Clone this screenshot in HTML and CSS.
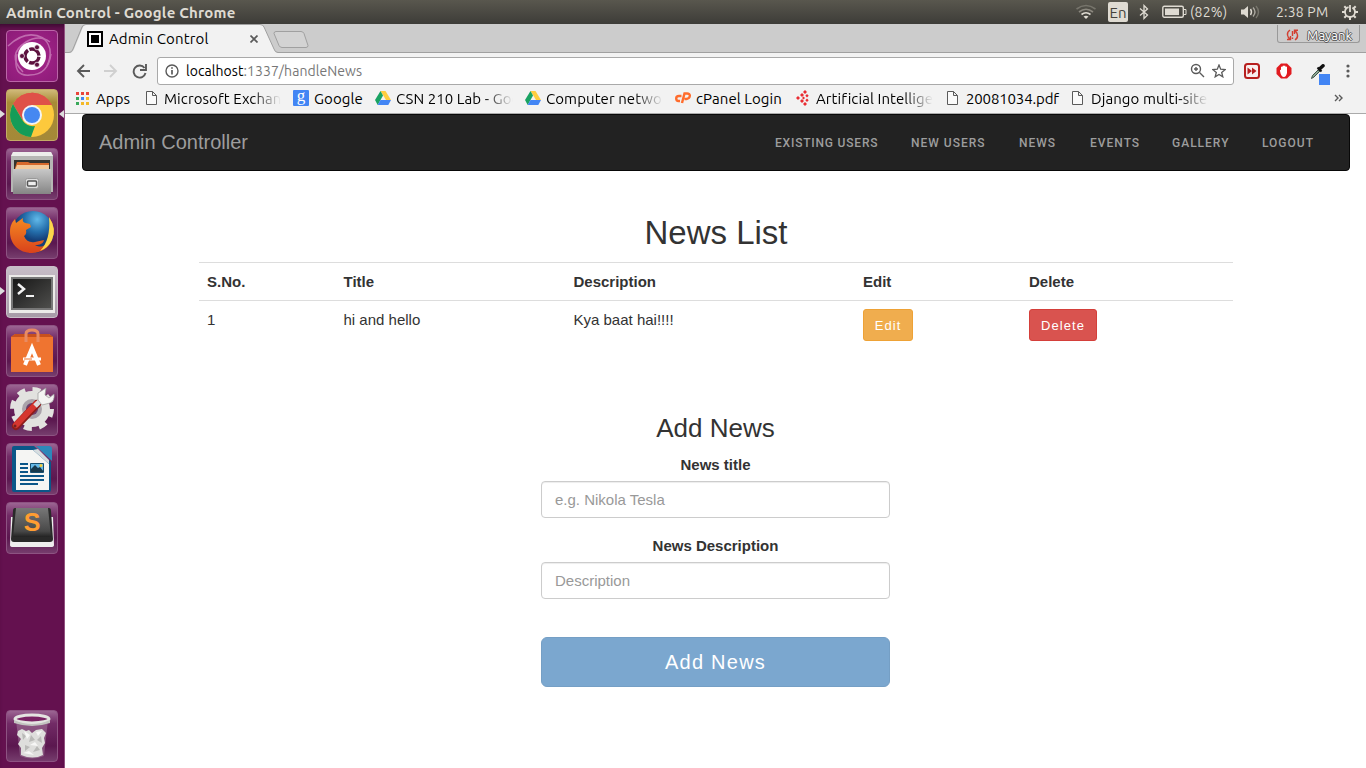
FILE: index.html
```html
<!DOCTYPE html>
<html lang="en">
<head>
<meta charset="utf-8">
<title>Admin Control</title>
<link rel="stylesheet" href="styles.css">
</head>
<body>
<header class="panel">
  <span class="panel-title">Admin Control - Google Chrome</span>
  <div class="tray">
    <svg class="wifi" width="22" height="16" viewBox="0 0 22 16" fill="none" stroke-width="1.6"><path d="M1.5 5Q11-2 20.500 5" stroke="#77756c"/><path d="M4 8Q11 2.500 18 8" stroke="#8b887f"/><path d="M6.500 10.500Q11 7 15.500 10.500" stroke="#dfdbd2"/><path d="M8.500 12.500L11 15l2.500-2.500Q11 11 8.500 12.500z" fill="#dfdbd2"/></svg>
    <span class="lang">En</span>
    <svg class="bt" width="10" height="16" viewBox="0 0 10 16" fill="none" stroke="#dfdbd2" stroke-width="1.3"><path d="M1 4.500l7.500 6.500L5 14.500v-13L8.500 5 1 11.500"/></svg>
    <svg class="battery" width="25" height="14" viewBox="0 0 25 14"><rect x=".8" y="1.300" width="20.500" height="11" rx="1.500" fill="none" stroke="#dfdbd2" stroke-width="1.400"/><path d="M3 3.500h14v6.600H3z" fill="#dfdbd2"/><path d="M22 4.500h2v5h-2" fill="none" stroke="#dfdbd2"/></svg>
    <span class="percent">(82%)</span>
    <svg class="volume" width="21" height="16" viewBox="0 0 21 16" fill="none" stroke-width="1.400"><path d="M1 5.500h3l4-3.500v12l-4-3.500H1z" fill="#dfdbd2"/><path d="M10.500 5q2 3 0 6" stroke="#dfdbd2"/><path d="M13 3.500q4 4.500 0 9" stroke="#aaa79e"/><path d="M16 2q5 6 0 12" stroke="#77756c"/></svg>
    <span class="clock">2:38 PM</span>
    <svg class="gear" width="18" height="18" viewBox="0 0 18 18" fill="none" stroke="#dfdbd2"><circle cx="9" cy="9" r="5" stroke-width="1.800" stroke-dasharray="27.500 4" stroke-dashoffset="-25.500"/><path d="M9 2v7" stroke-width="1.800"/><path d="M1 9h3M14 9h3M9 14v3M3.300 3.300l2 2M14.700 3.300l-2 2M3.300 14.700l2-2M14.700 14.700l-2-2" stroke-width="2"/></svg>
  </div>
</header>
<div class="desktop">
  <aside class="launcher">
    <div class="tile dash"><svg viewBox="0 0 52 52"><g fill="none" stroke="#e8b7dd" stroke-width="1.500" opacity=".5"><path d="M17 42Q0 25 20 12q13-8 24 0"/><path d="M2 16Q20-1 37 8q12 10 4 28"/><path d="M11 24q-5 23 13 21 18 0 21-21"/></g><circle cx="26" cy="26" r="14" fill="#fff"/><circle cx="26" cy="26" r="7" fill="none" stroke="#5d123f" stroke-width="3.400" stroke-dasharray="13.100 1.560" stroke-dashoffset="-.8"/><g fill="#5d123f" stroke="#fff" stroke-width=".7"><circle cx="16" cy="26" r="2.500"/><circle cx="31" cy="17.300" r="2.500"/><circle cx="31" cy="34.700" r="2.500"/></g></svg></div>
    <div class="tile chrome-app active"><svg viewBox="0 0 52 52"><circle cx="26" cy="26" r="22" fill="#fdc93c"/><path d="M26 26L7 15A22 22 0 0 1 46 16H26z" fill="#df5148"/><path d="M26 16L16.500 31 7 15A22 22 0 0 1 46 16z" fill="#df5148"/><path d="M7 15l10 17q4 6 12 5l-4 11A22 22 0 0 1 7 15z" fill="#159c58"/><circle cx="26" cy="26" r="10" fill="#f4f4f4"/><circle cx="26" cy="26" r="8" fill="#4688f1"/></svg><i class="arrow-left"></i><i class="arrow-right"></i></div>
    <div class="tile"><svg viewBox="0 0 52 52"><defs><linearGradient id="metal" x2="0" y2="1"><stop stop-color="#c8c8c8"/><stop offset="1" stop-color="#858585"/></linearGradient></defs><path d="M7 4h38l2 4v36H5V8z" fill="#b6b6b4"/><path d="M7 4h38l2 4H5z" fill="#ededeb"/><path d="M8 12h36v12H8z" fill="#35332e"/><path d="M9 20l2-6h11l2 1h19v8H9z" fill="#d8692b"/><path d="M11 17h32v5H9z" fill="#f4c99a"/><path d="M7 21h38v25H7z" fill="url(#metal)"/><rect x="19.500" y="30.500" width="13" height="10" rx="2" fill="#ddd" stroke="#999"/><rect x="21.500" y="33" width="9" height="5" rx="1" fill="#eee" stroke="#555" stroke-width="1.500"/></svg></div>
    <div class="tile"><svg viewBox="0 0 52 52"><defs><radialGradient id="globe" cx=".6" cy=".2"><stop stop-color="#61b9e9"/><stop offset=".6" stop-color="#246eab"/><stop offset="1" stop-color="#153f78"/></radialGradient><linearGradient id="fox" x2="0" y2="1"><stop stop-color="#f58a22"/><stop offset="1" stop-color="#d9421b"/></linearGradient></defs><circle cx="27" cy="25" r="21" fill="url(#globe)"/><path d="M43 10q8 12 3 23c-3 8-11 13-20 13C13 46 4 37 4 25c0-6 2-10 5-13l1 4 7-5c-1 4 1 5 7 6l1 3-5 3q1 4-2 6c2 5 6 7 11 6l9-2c-1 5-7 5-9 5 7 4 12 0 14-6 3-8 3-16 0-22z" fill="url(#fox)"/><path d="M43 10q8 12 3 23-4 8-12 11 11-11 9-34z" fill="#fbd64c"/></svg></div>
    <div class="tile terminal"><svg viewBox="0 0 52 52"><defs><linearGradient id="screen" x2="1" y2="1"><stop stop-color="#171717"/><stop offset="1" stop-color="#4e4e4c"/></linearGradient></defs><path d="M3 9h46v38H3z" fill="#ecebe9"/><path d="M5 11h42v33H5z" fill="#777"/><path d="M7 13h38v29H7z" fill="url(#screen)"/><path d="M12 18l6 5-6 5" fill="none" stroke="#f3f3f3" stroke-width="2.500"/><path d="M20 30h8" stroke="#f3f3f3" stroke-width="2"/></svg><i class="arrow-left"></i></div>
    <div class="tile"><svg viewBox="0 0 52 52"><path d="M5 12l4-3h34l4 3v35H5z" fill="#ef7430"/><path d="M5 12l4-3h34l4 3z" fill="#c8501d"/><path d="M20 17V9q0-4 6-4t6 4v8" fill="none" stroke="#e88b64" stroke-width="3"/><path d="M19 40l7-17 7 17" fill="none" stroke="#fff" stroke-width="4"/><path d="M17 32.500h18v3H17z" fill="#fff"/><path d="M18 34h8" stroke="#ef7430"/></svg></div>
    <div class="tile"><svg viewBox="0 0 52 52"><circle cx="26" cy="25" r="11" fill="#aaa3aa"/><circle cx="26" cy="25" r="6" fill="#6f3c68"/><g fill="none" stroke="#e2e2df"><circle cx="26" cy="25" r="14" stroke-width="8"/><circle cx="26" cy="25" r="19.500" stroke-width="5" stroke-dasharray="8 7.300"/></g><path d="M10 42l21-22" stroke="#8e1d1a" stroke-width="8" stroke-linecap="round"/><path d="M10 41l20-21" stroke="#d6362f" stroke-width="6" stroke-linecap="round"/><path d="M29 22l7-7" stroke="#ddd" stroke-width="5"/><path d="M32 16V9l8-5-1 7 4 3 5-4q1 7-4 9l-8 2z" fill="#f4f4f2" stroke="#999" stroke-width=".7"/><circle cx="9" cy="42" r="1.500" fill="#74211e"/></svg></div>
    <div class="tile"><svg viewBox="0 0 52 52"><path d="M8 3h20l17 16v28q0 2-2 2H8q-2 0-2-2V5q0-2 2-2z" fill="#0b5688"/><path d="M30 3h13q3 0 3 3v12z" fill="#2d88b9"/><path d="M10 7h17l16 14v26H10z" fill="#f5f5f3"/><path d="M27 7l5-1 11 11v4z" fill="#d7dddf"/><path d="M14 21h8M14 25h8M14 29h8M14 33h24M14 37h24M14 41h18" stroke="#0b5688" stroke-width="1.800"/><path d="M24.500 20.500h13v9h-13z" fill="#65b8e7" stroke="#174f70"/><path d="M25 29v-3l4-4 3 3 2-1 4 5z" fill="#17394c"/><circle cx="35" cy="22.500" r="1.500" fill="#f5cc37"/></svg></div>
    <div class="tile"><svg viewBox="0 0 52 52"><defs><linearGradient id="key" x2="0" y2="1"><stop stop-color="#777"/><stop offset=".8" stop-color="#484848"/><stop offset="1" stop-color="#222"/></linearGradient></defs><path d="M5 15h42l1 28q0 2-3 2H7q-3 0-3-2z" fill="#eee"/><path d="M9 6h34q2 0 2 3l2 28q0 3-3 3H8q-3 0-3-3L7 9q0-3 2-3z" fill="#292929"/><path d="M10 6h32l3 29H7z" fill="url(#key)"/></svg><b class="letter">S</b></div>
    <div class="tile trash"><svg viewBox="0 0 52 52"><path d="M10 10l4 36q12 5 24 0l4-36z" fill="#b795b0" opacity=".4"/><path d="M12 21l4-2 4 2 3-1 3 3 4-3 6-1 4 4-2 5 1 5-3 5 1 7q-10 5-22 0v-7l-3-4 3-5-4-4z" fill="#dededc"/><path d="M16 23l4 3-3 4zM25 25l4 5-6 2zM35 26l-4 4 5 3zM19 35l5 2-5 4zM31 36l3 4-7 2z" fill="#b9b9b7"/><path d="M18 21l6 4-3 4zM30 22l6-1-4 5zM24 35l5-3 3 4zM17 43l6-2 5 4z" fill="#f7f7f6"/><ellipse cx="26" cy="9" rx="17" ry="4" fill="#792363" stroke="#e4e4e1" stroke-width="3"/><path d="M8 10q18 8 36 0v3q-18 6-36 0z" fill="#c3c3c0"/></svg></div>
  </aside>
  <main class="browser">
    <div class="tabs">
      <svg class="tab-shapes" width="260" height="30" viewBox="0 0 260 30"><path d="M0 28.500h6Q8 28 9 25L18 3Q19 .5 22 .5H195Q198 .5 199 3L209 25Q210 28.500 213 28.500H260V30H0z" fill="#f2f2f2"/><path d="M0 28.500h4Q7 28.500 8 25L17 3Q18 .5 21 .5H195Q198 .5 199 3L209 25Q210 28.500 213 28.500H260" fill="none" stroke="#a0a0a0"/><path d="M211 7.500h25q2 0 3 2l4 12q0 2-2 2h-24q-2 0-3-2l-5-12q0-2 2-2z" fill="#d3d3d3" stroke="#a0a0a0"/></svg>
      <div class="tab-content"><svg width="16" height="16" viewBox="0 0 16 16"><path d="M0 0h16v16H0z"/><path d="M3 3h10v10H3z" stroke="#fff" stroke-width="2"/></svg><span class="tab-title">Admin Control</span><svg class="close" width="8" height="8" viewBox="0 0 8 8"><path d="M.5.5l7 7m0-7l-7 7" stroke="#5a5a5a" stroke-width="1.700"/></svg></div>
      <div class="profile"><svg width="13" height="12" viewBox="0 0 13 12" fill="none" stroke="#d23f31" stroke-width="1.400"><path d="M4 1Q1 3 1.500 6T4 10M1 10.500h3.500V7M9 11q3-2 2.500-5T9 2M12 1.200H8.500V5M6.500 2v5M6.500 8.500V10"/></svg><span>Mayank</span></div>
    </div>
    <div class="toolbar">
      <svg class="navs" width="72" height="16" viewBox="0 0 72 16" fill="none" stroke-width="1.900"><path d="M14 8H2m6-6L2 8l6 6" stroke="#5a5a5a"/><path d="M28 8h12m-6-6l6 6-6 6" stroke="#d0d0d0"/><path d="M68.500 5A6 6 0 1 0 69.500 10M70 1v6h-6" stroke="#5a5a5a"/></svg>
      <div class="address">
        <svg width="14" height="14" viewBox="0 0 14 14" fill="none" stroke="#5a5a5a" stroke-width="1.400"><circle cx="7" cy="7" r="6"/><path d="M7 6v4.500M7 3.200v1.500" stroke-width="1.700"/></svg>
        <span class="url"><b>localhost</b>:1337/handleNews</span>
        <svg class="magnify" width="15" height="15" viewBox="0 0 15 15" fill="none" stroke="#5a5a5a" stroke-width="1.400"><circle cx="6" cy="6" r="4.500"/><path d="M9.500 9.500L14 14M4 6h4M6 4v4"/></svg>
        <svg width="14" height="14" viewBox="0 0 14 14" fill="none" stroke="#5a5a5a" stroke-width="1.300"><path d="M7 1l1.700 4.200 4.500.3-3.500 2.900 1.100 4.400L7 10.400l-3.800 2.400 1.100-4.400L.8 5.500l4.500-.3z"/></svg>
      </div>
      <div class="extensions">
        <svg width="16" height="16" viewBox="0 0 16 16"><rect x="1" y="1" width="14" height="14" rx="2.500" fill="#f8eeee" stroke="#b71f1e" stroke-width="2"/><path d="M3.500 4.500L8 8l-4.500 3.500zM8 4.500L12.500 8 8 11.500z" fill="#b71f1e"/></svg>
        <svg width="16" height="16" viewBox="0 0 16 16"><path d="M5 .5h6L15.500 5v6L11 15.500H5L.5 11V5z" fill="#e11b20"/><path d="M4 7q1-1 1 1V4q1-1 1.500 0v3-4q1-1 1.500 0v4-4q1-1 1.500 0v5-4q1-1 1.500 0v6q-1 4-3 4-3 0-4-6z" fill="#fff"/></svg>
        <svg width="20" height="21" viewBox="0 0 20 21"><path d="M1.500 14.500l1-3 6-6 1.500 1.500-6 6z" fill="#8aa591" stroke="#425349"/><path d="M7.500 3.500l4 4" stroke="#111" stroke-width="2"/><path d="M9.500 5L13 1.800" stroke="#111" stroke-width="3.500" stroke-linecap="round"/><path d="M9 10h11v11H9z" fill="#4285f4"/></svg>
        <svg width="4" height="14" viewBox="0 0 4 14" fill="#5a5a5a"><circle cx="2" cy="2" r="1.600"/><circle cx="2" cy="7" r="1.600"/><circle cx="2" cy="12" r="1.600"/></svg>
      </div>
    </div>
    <nav class="bookmarks">
      <a class="bm bm-apps"><svg width="13" height="13" viewBox="0 0 13 13"><path d="M0 0h3v3H0zM5 0h3v3H5zM10 0h3v3h-3z" fill="#e9453a"/><path d="M0 5h3v3H0zM0 10h3v3H0z" fill="#39a85a"/><path d="M5 5h3v3H5z" fill="#4285f4"/><path d="M10 5h3v3h-3zM5 10h3v3H5zM10 10h3v3h-3z" fill="#f4b928"/></svg><span>Apps</span></a>
      <a class="bm bm-ms"><svg width="11" height="14" viewBox="0 0 11 14" fill="#fafafa" stroke="#5a5a5a"><path d="M.5.5h6l4 4v9H.5zM6.500.5v4h4"/></svg><span class="fade">Microsoft Exchan</span></a>
      <a class="bm bm-google"><i class="g-icon">g</i><span>Google</span></a>
      <a class="bm bm-drive"><svg width="16" height="14" viewBox="0 0 16 14"><path d="M5.500 0h5L16 9h-5z" fill="#ffcd40"/><path d="M5.500 0L0 9l2.700 5L8 4.500z" fill="#19a262"/><path d="M5.500 9H16l-2.700 5H2.700z" fill="#4285f4"/></svg><span class="fade">CSN 210 Lab - Goo</span></a>
      <a class="bm bm-drive network"><svg width="16" height="14" viewBox="0 0 16 14"><path d="M5.500 0h5L16 9h-5z" fill="#ffcd40"/><path d="M5.500 0L0 9l2.700 5L8 4.500z" fill="#19a262"/><path d="M5.500 9H16l-2.700 5H2.700z" fill="#4285f4"/></svg><span class="fade">Computer netwo</span></a>
      <a class="bm bm-cpanel"><svg width="16" height="12" viewBox="0 0 16 12" fill="none" stroke="#ff6c2c" stroke-width="2.400"><path d="M6.500 4H4Q1.200 4 1.200 6.500T3.500 9H5M7 11L9.500 1.500H12q3 0 2.800 2.500T11.500 7H9.500"/></svg><span>cPanel Login</span></a>
      <a class="bm bm-ai"><svg width="14" height="16" viewBox="0 0 14 16" fill="#e92c32"><path d="M10 0l2 2-2 2-2-2zM7 3l2 2-2 2-2-2zM3 6l2 2-2 2-2-2zM7 9l2 2-2 2-2-2zM10 12l2 2-2 2-2-2zM12 4l1.700 1.700L12 7.400l-1.700-1.700zM8.500 6.500L10 8 8.500 9.500 7 8zM12 8.600l1.700 1.700L12 12l-1.700-1.700z"/></svg><span class="fade">Artificial Intellige</span></a>
      <a class="bm bm-pdf"><svg width="11" height="14" viewBox="0 0 11 14" fill="#fafafa" stroke="#5a5a5a"><path d="M.5.5h6l4 4v9H.5zM6.500.5v4h4"/></svg><span>20081034.pdf</span></a>
      <a class="bm bm-django"><svg width="11" height="14" viewBox="0 0 11 14" fill="#fafafa" stroke="#5a5a5a"><path d="M.5.5h6l4 4v9H.5zM6.500.5v4h4"/></svg><span class="fade">Django multi-site</span></a>
      <svg class="more" width="9" height="8" viewBox="0 0 9 8" fill="none" stroke="#5a5a5a" stroke-width="1.400"><path d="M1 1l3 3-3 3M5 1l3 3-3 3"/></svg>
    </nav>
    <section class="page">
      <nav class="navbar"><a class="brand">Admin Controller</a><div class="menu"><a class="m1">Existing Users</a><a class="m2">New Users</a><a class="m3">News</a><a class="m4">Events</a><a class="m5">Gallery</a><a class="m6">Logout</a></div></nav>
      <div class="container">
        <h1>News List</h1>
        <table><colgroup><col class="c1"><col class="c2"><col class="c3"><col class="c4"><col></colgroup>
          <thead><tr><th>S.No.</th><th>Title</th><th>Description</th><th>Edit</th><th>Delete</th></tr></thead>
          <tbody><tr><td>1</td><td>hi and hello</td><td>Kya baat hai!!!!</td><td><button class="btn edit">Edit</button></td><td><button class="btn delete">Delete</button></td></tr></tbody>
        </table>
        <form><h2>Add News</h2><label>News title</label><input placeholder="e.g. Nikola Tesla"><label>News Description</label><input placeholder="Description"><button class="submit" type="button">Add News</button></form>
      </div>
    </section>
  </main>
</div>
</body>
</html>
```
FILE: styles.css
```css
* { box-sizing: border-box; }
body { margin: 0; width: 1366px; height: 768px; overflow: hidden; background: #fff; font-family: Ubuntu, "Noto Sans", sans-serif; }
svg { display: block; flex: none; }
.panel { height: 24px; display: flex; align-items: center; justify-content: space-between; padding: 0 7px 0 6px; background: linear-gradient(#59574e, #3d3c38); color: #dfdbd2; }
.panel-title { font-size: 15px; font-weight: 700; letter-spacing: .22px; white-space: nowrap; }
.tray { display: flex; align-items: center; font-size: 15px; white-space: nowrap; }
.lang { width: 20px; height: 20px; margin-left: 11px; border-radius: 2px; background: #dfdbd2; color: #44423c; text-align: center; line-height: 21px; }
.bt { margin-left: 11px; }
.battery { margin-left: 13px; }
.percent { width: 39px; margin-left: 3px; font-size: 14px; letter-spacing: .2px; }
.volume { margin-left: 11px; }
.clock { width: 55px; margin-left: 15px; font-size: 14px; letter-spacing: .2px; }
.gear { margin-left: 10px; }
.desktop { display: flex; height: 744px; }
.launcher { width: 65px; padding: 6px; display: flex; flex-direction: column; gap: 7px; background: #64114f; border-right: 1px solid #915080; box-shadow: inset 0 5px 5px -3px #38092e; }
.tile { position: relative; width: 52px; height: 52px; flex: none; border-radius: 4px; border: 1px solid #8d5382; background: linear-gradient(#9c6593 0, #722b66 25%, #5b174f 70%, #763d6d); }
.tile svg { width: 52px; height: 52px; margin: -1px; }
.dash { background: radial-gradient(circle, #a9268d, #8c1b78); border-color: #bb65a8; }
.chrome-app { background: linear-gradient(#d0b979, #a78b36 25%, #a48938); border-color: #c4ab67; }
.terminal { background: linear-gradient(#c7bdc7, #a79ba7); border-color: #c9bec8; }
.trash { margin-top: auto; }
.arrow-left, .arrow-right { position: absolute; top: 20px; border: solid transparent; border-width: 4px 5px; }
.arrow-left { left: -7px; border-left-color: #ddd; border-right: 0; }
.arrow-right { right: -7px; border-right-color: #ddd; border-left: 0; }
.letter { position: absolute; left: 14px; top: 3px; width: 22px; text-align: center; color: #ff9d31; font: 700 25px/32px "Liberation Sans", sans-serif; }
.browser { width: 1301px; display: flex; flex-direction: column; background: #f2f2f2; }
.tabs { position: relative; display: flex; height: 29px; background: #ccc; border-bottom: 1px solid #a0a0a0; }
.tab-shapes { position: absolute; left: 0; top: 0; }
.tab-content { position: relative; display: flex; align-items: center; width: 172px; margin-left: 22px; padding-top: 1px; font-size: 15px; }
.tab-title { margin-left: 6px; letter-spacing: .12px; white-space: nowrap; }
.close { margin-left: auto; margin-right: 1px; }
.profile { display: flex; align-items: center; justify-content: space-between; height: 18px; width: 83px; margin: 1px 6px 0 auto; padding: 3px 7px 0 8px; border: 1px solid #999; border-top: 0; border-radius: 0 0 3px 3px; color: #fff; font-size: 13px; text-shadow: -1px 0 #555, 1px 0 #555, 0 1px #555, 0 -1px #555; }
.toolbar { display: flex; align-items: center; height: 33px; margin-top: 1px; padding: 0 15px 0 11px; }
.address { width: 1077px; height: 28px; display: flex; align-items: center; margin-left: 9px; padding: 0 7px; background: #fff; border: 1px solid #a9a9a9; border-radius: 3px; }
.url { margin-left: 7px; font-size: 14px; letter-spacing: .06px; color: #777; }
.url b { font-weight: 400; color: #000; }
.magnify { margin-left: auto; margin-right: 7px; }
.extensions { display: flex; align-items: center; margin-left: 10px; }
.extensions svg + svg { margin-left: 16px; }
.extensions svg:nth-child(3) { margin-left: 18px; margin-top: 7px; }
.bookmarks { display: flex; align-items: center; height: 27px; padding: 0 23px 4px 11px; border-bottom: 1px solid #aaa; font-size: 15px; letter-spacing: .08px; white-space: nowrap; }
.bm { display: flex; align-items: center; flex: none; }
.bm svg + span, .g-icon + span { margin-left: 5px; }
.bm-apps { width: 70px; }
.bm-ms { width: 147px; }
.bm-google { width: 82px; }
.bm-drive { width: 150px; }
.bm-cpanel { width: 120px; }
.bm-ai { width: 152px; }
.bm-pdf { width: 125px; letter-spacing: -.15px; }
.bm-apps svg + span, .bm-ms svg + span, .bm-ai svg + span, .bm-pdf svg + span, .bm-django svg + span { margin-left: 7px; }
.bm-pdf svg + span, .bm-django svg + span { margin-left: 8px; }
.fade { width: 117px; overflow: hidden; -webkit-mask-image: linear-gradient(90deg, #000 75%, transparent); mask-image: linear-gradient(90deg, #000 75%, transparent); }
.g-icon { width: 16px; height: 16px; background: #4285f4; border-radius: 1px; color: #fff; text-align: center; font: 17px/12px "Liberation Serif", serif; }
.more { margin-left: auto; }
.page { flex: 1; background: #fff; padding: 0 16px 0 17px; font-family: "Liberation Sans", Arial, sans-serif; font-size: 15px; line-height: 21px; color: #333; }
.navbar { display: flex; align-items: center; justify-content: space-between; height: 57px; border: 1px solid #080808; border-radius: 4px; padding: 0 35px 0 16px; background: #222; color: #9d9d9d; }
.brand { font-size: 20px; }
.menu { display: flex; font: 500 12px/20px Roboto, sans-serif; letter-spacing: 1px; text-transform: uppercase; white-space: nowrap; }
.m1 { width: 136px; letter-spacing: .8px; } .m2 { width: 108px; } .m3 { width: 71px; } .m4 { width: 82px; } .m5 { width: 90px; } .m6 { width: 52px; }
.container { width: 1034px; margin-left: 117px; }
h1, h2 { font-weight: 400; text-align: center; }
h1 { margin: 42px 0 10px; font-size: 33px; line-height: 39px; }
table { width: 100%; table-layout: fixed; border-collapse: collapse; text-align: left; }
.c1 { width: 136.500px; } .c2 { width: 230px; } .c3 { width: 289.500px; } .c4 { width: 166px; }
th, td { padding: 8px; border-top: 1px solid #ddd; vertical-align: top; line-height: 22px; }
th { padding-bottom: 7px; }
.btn { display: block; height: 32px; border: 1px solid; border-radius: 3px; padding: 0; color: #fff; font: 13px "Liberation Sans", sans-serif; letter-spacing: 1.080px; }
.edit { width: 50px; background: #f0ad4e; border-color: #eea236; }
.delete { width: 68px; background: #d9534f; border-color: #d43f3a; }
form { width: 349px; margin: 64px auto 0 342px; display: flex; flex-direction: column; text-align: center; }
h2 { margin: 0 0 11px; font-size: 26px; line-height: 30px; }
label { font-weight: 700; line-height: 22px; margin-bottom: 5px; }
input { height: 37px; border: 1px solid #ccc; border-radius: 4px; padding: 0 13px; margin-bottom: 17px; box-shadow: inset 0 1px 1px rgba(0,0,0,.075); font: 15px "Liberation Sans", sans-serif; }
input::placeholder { color: #999; }
.submit { height: 50px; margin-top: 21px; border: 1px solid #759fc5; border-radius: 6px; background: #7ba7cf; color: #fff; font: 20px "Liberation Sans", sans-serif; letter-spacing: 1.250px; }
```
